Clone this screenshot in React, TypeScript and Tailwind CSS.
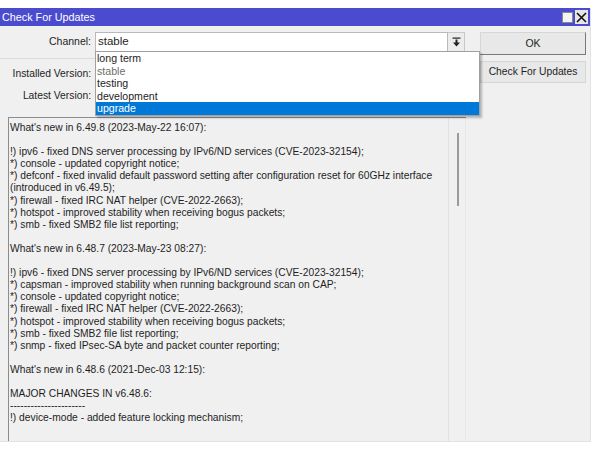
import React from "react";

const notes: string[] = [
  "What's new in 6.49.8 (2023-May-22 16:07):",
  "",
  "!) ipv6 - fixed DNS server processing by IPv6/ND services (CVE-2023-32154);",
  "*) console - updated copyright notice;",
  "*) defconf - fixed invalid default password setting after configuration reset for 60GHz interface",
  "(introduced in v6.49.5);",
  "*) firewall - fixed IRC NAT helper (CVE-2022-2663);",
  "*) hotspot - improved stability when receiving bogus packets;",
  "*) smb - fixed SMB2 file list reporting;",
  "",
  "What's new in 6.48.7 (2023-May-23 08:27):",
  "",
  "!) ipv6 - fixed DNS server processing by IPv6/ND services (CVE-2023-32154);",
  "*) capsman - improved stability when running background scan on CAP;",
  "*) console - updated copyright notice;",
  "*) firewall - fixed IRC NAT helper (CVE-2022-2663);",
  "*) hotspot - improved stability when receiving bogus packets;",
  "*) smb - fixed SMB2 file list reporting;",
  "*) snmp - fixed IPsec-SA byte and packet counter reporting;",
  "",
  "What's new in 6.48.6 (2021-Dec-03 12:15):",
  "",
  "MAJOR CHANGES IN v6.48.6:",
  "----------------------",
  "!) device-mode - added feature locking mechanism;",
];

const channels = ["long term", "stable", "testing", "development", "upgrade"];

function ArrowDown() {
  return (
    <svg width="9" height="10" viewBox="0 0 9 10">
      <rect x="0.5" y="0.5" width="8" height="1.2" fill="#222" />
      <rect x="3.5" y="2.5" width="2" height="3.5" fill="#222" />
      <path d="M1 5.5 L8 5.5 L4.5 9.5 Z" fill="#222" />
    </svg>
  );
}

export default function App() {
  return (
    <div
      className="w-[593px] h-[450px] bg-white pt-[8px] text-[#1e1e1e]"
      style={{ fontFamily: '"Liberation Sans", Arial, sans-serif' }}
    >
      <div className="w-[591px] h-[434px] flex flex-col bg-[#f0f0f0] border-r border-b border-[#e2e2e2]">
        {/* title bar */}
        <div className="h-[18px] bg-[#4b4bcf] flex items-center justify-between pl-[2px] pr-[2px]">
          <span className="text-white text-[10.8px] leading-none">Check For Updates</span>
          <div className="flex items-center gap-[2px]">
            <div className="w-[11px] h-[11px] bg-[#f4f4f4] border border-[#8a8a8a]" />
            <div className="w-[13px] h-[14px] bg-[#e6e6e6] flex items-center justify-center">
              <svg width="11" height="11" viewBox="0 0 11 11">
                <path d="M1 1 L10 10 M10 1 L1 10" stroke="#111" strokeWidth="1.6" />
              </svg>
            </div>
          </div>
        </div>

        {/* form + buttons */}
        <div className="flex">
          <div className="flex flex-col w-[480px]">
            <div className="flex items-center mt-[6px] h-[20px] relative">
              <span className="w-[92px] text-right text-[10.5px] pr-[1px]">Channel:</span>
              <div className="ml-[3px] w-[353px] h-[20px] bg-white border border-[#b9b9b9] flex items-center pl-[2px] text-[11.5px]">
                stable
              </div>
              <div className="w-[17px] h-[20px] bg-[#ececec] border-t border-b border-r border-[#c8c8c8] flex items-center justify-center">
                <ArrowDown />
              </div>
              {/* open channel list */}
              <div className="absolute left-[95px] top-[19px] w-[385px] h-[65px] bg-white border border-[#a0a0a0] shadow-[2px_2px_2px_rgba(0,0,0,0.25)] z-10 flex flex-col">
                {channels.map((c) => (
                  <div
                    key={c}
                    className={
                      c === "upgrade"
                        ? "h-[12.6px] leading-[12.6px] text-[10.6px] pl-[1px] bg-[#0078d7] text-white"
                        : c === "stable"
                        ? "h-[12.6px] leading-[12.6px] text-[10.6px] pl-[1px] text-[#6d6d6d]"
                        : "h-[12.6px] leading-[12.6px] text-[10.6px] pl-[1px] text-[#1e1e1e]"
                    }
                  >
                    {c}
                  </div>
                ))}
              </div>
            </div>
            <div className="mt-[6px] w-[95px] h-px bg-[#dcdcdc]" />
            <div className="flex items-center h-[22px] mt-[4px]">
              <span className="w-[92px] text-right text-[10.3px] pr-[1px]">Installed Version:</span>
            </div>
            <div className="flex items-center h-[22px]">
              <span className="w-[92px] text-right text-[10.3px] pr-[1px]">Latest Version:</span>
            </div>
          </div>
          <div className="flex flex-col gap-[6px] mt-[6px]">
            <button className="w-[106px] h-[23px] bg-[#e8e8e8] border border-[#d6d6d6] border-r-[#7a7a7a] border-b-[#7a7a7a] text-[10.5px] text-[#1e1e1e]">
              OK
            </button>
            <button className="w-[106px] h-[22px] bg-[#e8e8e8] border border-[#d6d6d6] text-[10.3px] text-[#1e1e1e]">
              Check For Updates
            </button>
          </div>
        </div>

        {/* release notes */}
        <div className="ml-[8px] mt-[10px] w-[458px] h-[324px] border-l border-t border-[#8c8c8c] flex">
          <div className="flex-1 pl-[1px] pt-[4px] text-[10.25px] leading-[12.1px] whitespace-pre overflow-hidden">
            {notes.map((l, i) => (
              <div key={i} className="h-[12.1px]">
                {l}
              </div>
            ))}
          </div>
          <div className="w-[18px] border-l border-[#e2e2e2] border-r border-r-[#e8e8e8] relative">
            <div className="absolute left-[8px] top-[15px] w-[2px] h-[73px] bg-[#9a9a9a]" />
          </div>
        </div>
      </div>
    </div>
  );
}
